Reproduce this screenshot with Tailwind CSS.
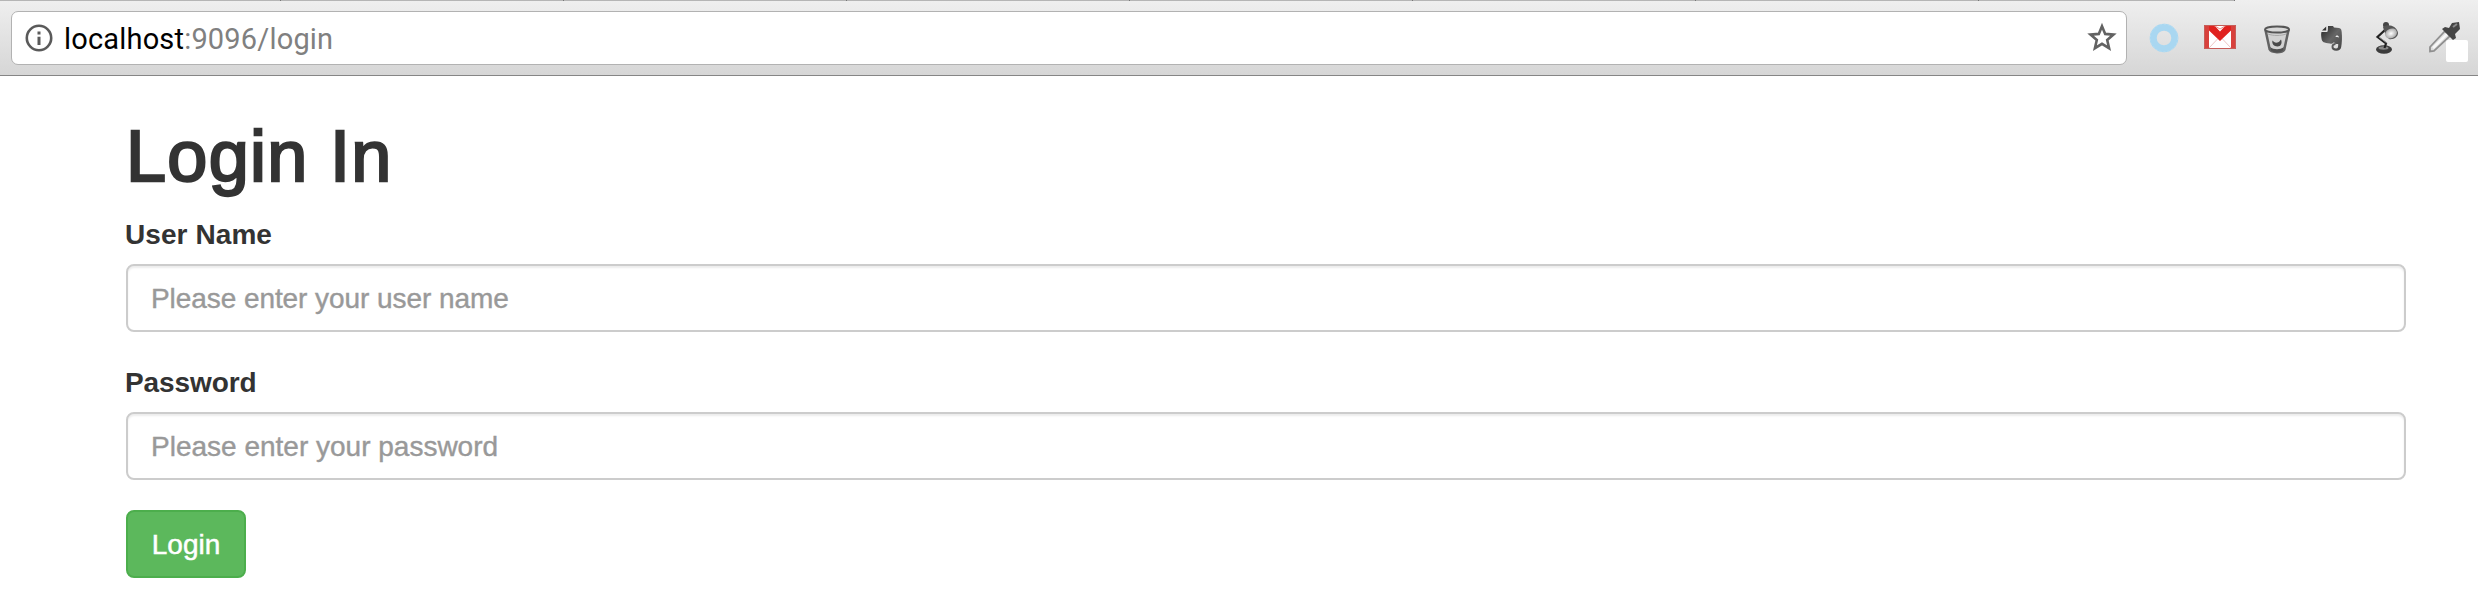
<!DOCTYPE html>
<html lang="en">
<head>
<meta charset="utf-8">
<title>Login</title>
<script src="https://cdn.jsdelivr.net/npm/@tailwindcss/browser@4"></script>
</head>
<body class="h-[610px] overflow-hidden bg-white font-['Liberation_Sans',sans-serif] text-[28px] leading-[40px] text-[#333]">
<header class="relative flex h-[76px] items-start border-b border-[#858585] bg-linear-to-b from-[#efefef] to-[#d6d6d6] pt-[11px] pl-[11px]">
  <div class="absolute top-0 left-0 flex h-px w-[2235px] bg-[#b5b5b5]">
    <i class="h-px w-[281px] border-r border-[#777]"></i><i class="h-px w-[283px] border-r border-[#777]"></i><i class="h-px w-[283px] border-r border-[#777]"></i><i class="h-px w-[283px] border-r border-[#777]"></i><i class="h-px w-[283px] border-r border-[#777]"></i><i class="h-px w-[283px] border-r border-[#777]"></i><i class="h-px w-[283px] border-r border-[#777]"></i><i class="h-px flex-1 border-r border-[#777]"></i>
  </div>
  <div class="flex h-[54px] w-[2116px] items-center rounded-[7px] border border-[#b2b2b2] bg-white pr-[8px] pl-[13px]">
    <svg class="size-[28px] shrink-0" viewBox="0 0 28 28" fill="none"><circle cx="14" cy="14" r="12.2" stroke="#5a5a5a" stroke-width="2.6"/><path d="M12.5 7.4h3v3h-3zM12.5 12.8h3V21h-3z" fill="#5a5a5a"/></svg>
    <div class="ml-[11px] flex-1 pt-[2px] font-[Roboto,sans-serif] text-[29px] leading-[40px] tracking-[0.18px] text-black whitespace-nowrap">localhost<span class="text-[#808080]">:9096/login</span></div>
    <svg class="size-[32px] shrink-0" viewBox="0 0 32 32" fill="none"><path d="M16 4.2l3.2 7.7 8.3.7-6.3 5.4 1.9 8.2-7.1-4.4-7.1 4.4 1.9-8.2-6.3-5.4 8.3-.7z" stroke="#626262" stroke-width="2.6"/></svg>
  </div>
  <div class="flex">
    <svg class="mt-[12px] ml-[22px] size-[30px]" viewBox="0 0 30 30" fill="none"><circle cx="15" cy="15" r="10.800" stroke="#a9d7f1" stroke-width="7"/><circle cx="15" cy="15" r="13.7" stroke="#b8def2" stroke-width="1" stroke-dasharray="2 2"/></svg>
    <svg class="mt-[14px] ml-[25px] h-[24px] w-[32px]" viewBox="0 0 32 24"><path d="M0 0h32v24H0z" fill="#d8413c"/><path d="M5 1h22v22H5z" fill="#fff"/><path d="M5 23l8.5-9M27 23l-8.5-9" stroke="#ecc6c4" fill="none"/><path d="M5 0h5l6 6.5L22 0h5v5.500L16 16 5 5.500z" fill="#e0221f"/><path d="M5 .5h5L16 4l6-3.500h5" stroke="#e98c88" fill="none"/><path d="M.5.5h31v23H.5z" fill="none" stroke="#c65e59"/></svg>
    <svg class="mt-[14px] ml-[27px] h-[30px] w-[28px]" viewBox="0 0 28 30" fill="none"><path d="M2.500 5l4.200 19.500c2 3.500 12.500 3.500 14.600 0L25.500 5" fill="#d2d2d2" stroke="#636363" stroke-width="2.500"/><ellipse cx="14" cy="4.500" rx="12" ry="3" fill="#d8d8d8" stroke="#555" stroke-width="2"/><path d="M7 22c4 3 10 3 14 0l-1 3.500c-3 2.500-9 2.500-12 0z" fill="#505050"/><path d="M9.500 15.500c1 1.500 3 2.500 5 2 2-.5 2.500-2 3.500-3 1.500 3.500 0 7-3.500 7s-6-3-5-6z" fill="#4a4a4a"/><path d="M5 9c5 2 13 2 18 0" stroke="#aaa"/></svg>
    <svg class="mt-[15px] ml-[30px] h-[25px] w-[22px]" viewBox="0 0 22 25"><defs><linearGradient id="e" x1="0" y1="0" x2="1" y2="1"><stop stop-color="#222"/><stop offset=".5" stop-color="#666"/><stop offset="1" stop-color="#444"/></linearGradient></defs><path d="M7 0h5l1 1.500 5 .5c2 .3 2.500 2 2.700 4 .5 5 .3 11-.5 15-.5 2.500-2 3.700-5 3.700-3 0-4.700-1.500-4.700-4 0-2.500 1.800-3.700 4-3.700v2c-1.500 0-2 .8-2 1.800 0 1.200 1 1.700 2.500 1.700 2 0 2.200-1.500 2.200-4.500-2 .2-3.700-.5-4.200-2-1 1.500-2 2-4 1.500-6-.5-8-1.500-8.500-5C0 9 0 8 .5 6H5c1.300 0 1.800-.5 1.800-1.800z" fill="url(#e)"/><path d="M5.200.6v4H1z" fill="#333"/><path d="M14.500 11c.5-2 3-2 3.500.5-1-.5-2.500-.5-3.500-.5z" fill="#eee"/></svg>
    <svg class="mt-[11px] ml-[32px] h-[32px] w-[24px]" viewBox="0 0 24 32"><defs><radialGradient id="l"><stop stop-color="#fff"/><stop offset="1" stop-color="#aaa"/></radialGradient></defs><ellipse cx="9" cy="27.500" rx="8" ry="4.200" fill="#3b3b3b"/><ellipse cx="8.500" cy="26" rx="5" ry="1.700" fill="#888"/><path d="M10 8L2.500 15 11 21.500 9.500 26" fill="none" stroke="#222" stroke-width="2.200"/><path d="M4 15l8 6" stroke="#999"/><circle cx="11" cy="3" r="3" fill="#444"/><path d="M8 5c5-4 14-1 15 6 0 4-5 7-9 6-3-3-5-8-6-12z" fill="#555"/><ellipse cx="16" cy="11.500" rx="6.200" ry="4.800" transform="rotate(-25 16 11.500)" fill="url(#l)"/></svg>
    <svg class="mt-[10px] ml-[29px] h-[42px] w-[40px]" viewBox="0 0 40 42"><path d="M2 30.500V26L17 10l5 5L6 30z" fill="#ddd" stroke="#909090" stroke-width="1.800"/><path d="M5 27L19 13" stroke="#f7f7f7" stroke-width="2.500"/><path d="M14 8l3-2 4 1 3-5 7-1 1 7-5 5 1 4-3 2z" fill="#444"/><path d="M25 6l4-3" stroke="#888" stroke-width="2"/><rect x="18" y="19" width="22" height="22" rx="2" fill="#fff"/></svg>
  </div>
</header>
<main class="flex flex-col items-start pl-[126px]">
  <h1 class="mt-[41px] text-[72px] leading-[79px] font-normal tracking-[1.3px] whitespace-nowrap [-webkit-text-stroke:2.4px_#333]">Login In</h1>
  <form class="flex w-[2280px] flex-col items-start">
    <label for="u" class="relative top-px mt-[18px] -ml-px font-bold tracking-[0.08px]">User Name</label>
    <input id="u" type="text" placeholder="Please enter your user name" class="mt-[10px] h-[68px] w-full rounded-[8px] border-2 border-[#ccc] px-[23px] pt-[2px] tracking-[-0.07px] shadow-[inset_0_2px_2px_rgba(0,0,0,0.075)] [-webkit-text-stroke:0.4px_#999] placeholder:text-[#999]">
    <label for="p" class="relative top-px mt-[30px] -ml-px font-bold tracking-[-0.08px]">Password</label>
    <input id="p" type="password" placeholder="Please enter your password" class="mt-[10px] h-[68px] w-full rounded-[8px] border-2 border-[#ccc] px-[23px] pt-[2px] shadow-[inset_0_2px_2px_rgba(0,0,0,0.075)] [-webkit-text-stroke:0.4px_#999] placeholder:text-[#999]">
    <button type="button" class="mt-[30px] h-[68px] w-[120px] rounded-[8px] border-2 border-[#4cae4c] bg-[#5cb85c] pt-[2px] text-white [-webkit-text-stroke:0.5px_#fff]">Login</button>
  </form>
</main>
</body>
</html>
